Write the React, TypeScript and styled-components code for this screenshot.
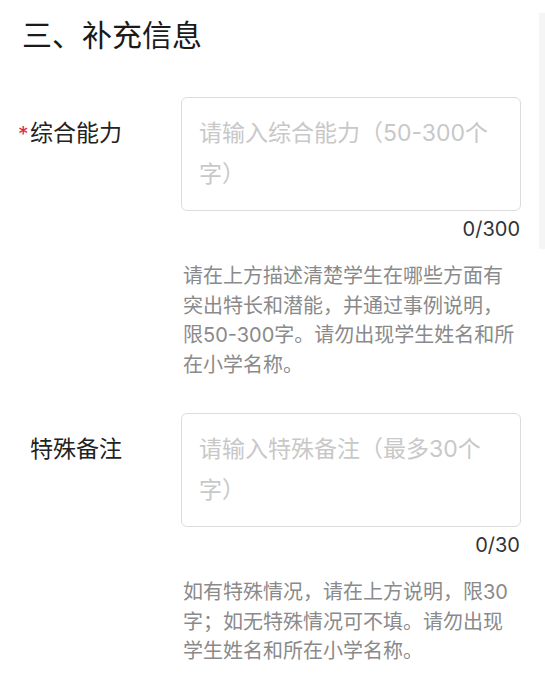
import React from 'react';
import styled, { createGlobalStyle } from 'styled-components';

const GlobalStyle = createGlobalStyle`
  html, body {
    margin: 0;
    padding: 0;
    background: #ffffff;
  }
  body {
    font-family: Inter, "Noto Sans CJK SC", "Noto Sans", sans-serif;
  }
`;

const Page = styled.div`
  padding: 15px 24px 0 22px;
`;

const Title = styled.h2`
  margin: 0 0 42px;
  font-size: 30px;
  line-height: 40px;
  font-weight: 400;
  color: #1a1a1a;
`;

const FieldRow = styled.div`
  display: grid;
  grid-template-columns: 159px 1fr;
  margin-bottom: 33px;
`;

const Label = styled.div`
  padding: 16px 0 0 8px;
  font-size: 23px;
  line-height: 41px;
  color: #222;
  height: 41px;
`;

const Required = styled.span`
  display: inline-block;
  width: 12px;
  margin-left: -12px;
  color: #e0283c;
  font-size: 21px;
  line-height: 44px;
  vertical-align: top;
  text-align: left;
`;

const Body = styled.div`
  display: flex;
  flex-direction: column;
`;

const TextArea = styled.textarea`
  box-sizing: border-box;
  width: 100%;
  height: 114px;
  padding: 15px 17px;
  border: 1px solid #dcdcdc;
  border-radius: 6px;
  font-family: inherit;
  font-size: 23px;
  line-height: 41px;
  color: #222;
  resize: none;
  outline: none;
  overflow: hidden;
  display: block;

  &::placeholder {
    color: #c8c8c8;
  }
`;

const Counter = styled.div`
  margin-top: 4px;
  padding-right: 1px;
  text-align: right;
  font-size: 20px;
  line-height: 28px;
  color: #333;
`;

const Help = styled.p`
  margin: 19px 0 0;
  padding-left: 2px;
  font-size: 20px;
  line-height: 29.5px;
  color: #8a8a8a;
`;

const ScrollHint = styled.div`
  position: fixed;
  top: 13px;
  right: 0;
  width: 6px;
  height: 236px;
  background: #f5f5f5;
`;

interface FieldProps {
  label: string;
  required?: boolean;
  placeholder: string;
  max: number;
  help: string;
}

const Field = ({ label, required, placeholder, max, help }: FieldProps) => (
  <FieldRow>
    <Label>
      {required && <Required>*</Required>}
      {label}
    </Label>
    <Body>
      <TextArea placeholder={placeholder} maxLength={max} />
      <Counter>0/{max}</Counter>
      <Help>{help}</Help>
    </Body>
  </FieldRow>
);

const App = () => {
  return (
    <Page>
      <GlobalStyle />
      <ScrollHint />
      <Title>三、补充信息</Title>
      <Field
        label="综合能力"
        required
        placeholder="请输入综合能力（50-300个字）"
        max={300}
        help="请在上方描述清楚学生在哪些方面有突出特长和潜能，并通过事例说明，限50-300字。请勿出现学生姓名和所在小学名称。"
      />
      <Field
        label="特殊备注"
        placeholder="请输入特殊备注（最多30个字）"
        max={30}
        help="如有特殊情况，请在上方说明，限30字；如无特殊情况可不填。请勿出现学生姓名和所在小学名称。"
      />
    </Page>
  );
};

export default App;
